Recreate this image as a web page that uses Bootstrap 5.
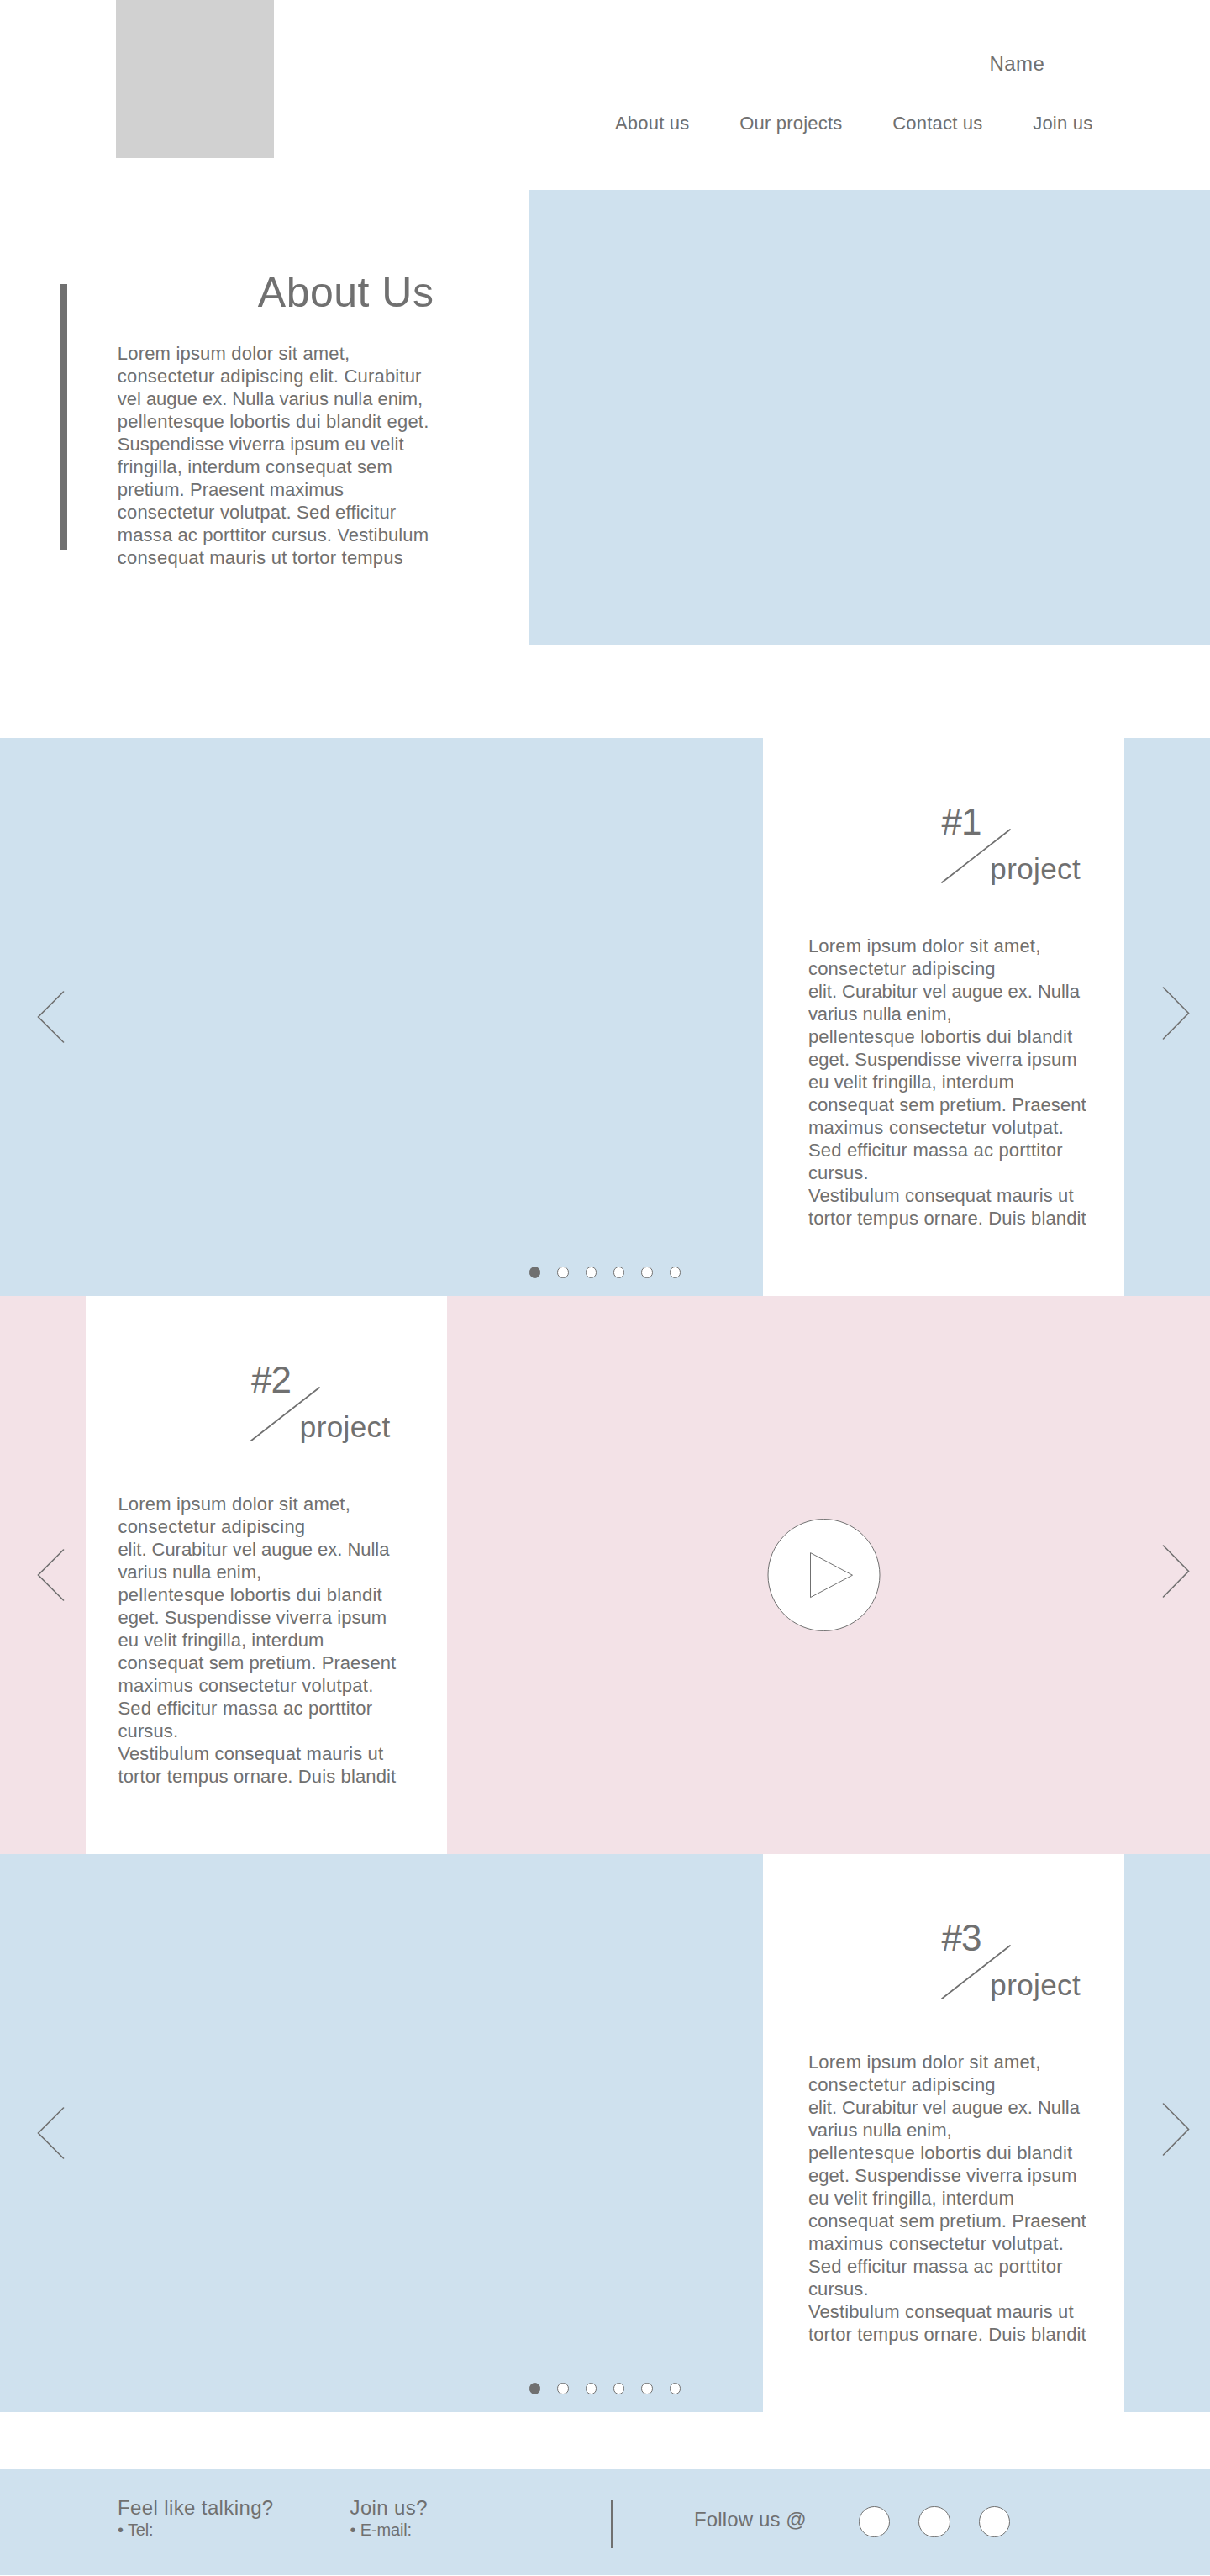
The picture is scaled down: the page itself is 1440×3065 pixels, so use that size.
<!DOCTYPE html>
<html lang="en">
<head>
<meta charset="utf-8">
<meta name="viewport" content="width=device-width, initial-scale=1">
<title>About Us</title>
<link rel="stylesheet" href="https://cdn.jsdelivr.net/npm/bootstrap@5.3.0/dist/css/bootstrap.min.css">
<style>
  :root { --ink: #707070; --sky: #cfe1ee; --rose: #f3e2e7; }
  body { font-family: "Liberation Sans", Arial, sans-serif; color: var(--ink); background: #fff; font-size: 22px; line-height: 27px; width: 1440px; }
  .bg-sky { background: var(--sky); }
  .bg-rose { background: var(--rose); }
  .bg-ink { background: var(--ink); }
  svg { display: block; fill: none; stroke: var(--ink); }

  .site-header { height: 226px; padding-left: 138px; }
  .logo-box { width: 188px; height: 188px; background: #d1d1d1; }
  .header-side { width: 708px; padding-top: 62px; }
  .site-name { font-size: 24px; line-height: 27px; letter-spacing: .45px; margin: 0 0 45px 445.5px; }
  .site-menu { gap: 59.8px; line-height: 25px; letter-spacing: .2px; }
  .site-menu .nav-link { padding: 0; color: var(--ink); }

  .hero { height: 540.5px; margin-bottom: 111.5px; }
  .hero-side { width: 630px; padding-left: 71.5px; }
  .hero-bar { width: 8px; height: 317px; margin-top: 112px; }
  .hero-text { padding: 94px 0 0 60.3px; }
  .hero-text h1 { font-size: 50px; line-height: 56px; font-weight: 400; letter-spacing: .5px; margin: 0 0 31px 167px; }

  .slide-row { height: 664px; }
  .slide-media { width: 908px; }
  .slide-edge { width: 102px; }
  .slide-panel { width: 430px; padding: 75px 0 0 53.9px; }
  .slide-panel.panel-start { padding-left: 38.4px; }
  .slide-title { width: 170px; margin: 0 0 59px 157.8px; font-weight: 400; }
  .slide-title .num { font-size: 44px; line-height: 49px; letter-spacing: -1px; padding-left: .8px; }
  .slide-title .word { font-size: 35px; line-height: 39px; letter-spacing: .4px; margin-top: 12px; padding-left: 58.6px; }
  .slide-title svg { position: absolute; left: 0; top: 32px; stroke-width: 1.7; stroke-linecap: round; }
  .chevron { background: none; border: 0; padding: 0; }
  .chevron svg { stroke-width: 1.6; stroke-linecap: round; }
  .chevron-prev { margin-left: 44px; }
  .chevron-next { margin: 0 24px 9px 0; }
  .play-btn { background: none; border: 0; padding: 0; margin-left: 381px; }
  .slide-dots { position: absolute; left: 0; right: 0; bottom: 21.3px; gap: 20px; }
  .slide-dots span { width: 13.33px; height: 13.33px; border-radius: 50%; background: #fff; border: 1px solid var(--ink); }
  .slide-dots .on { background: var(--ink); }

  .copy span { white-space: nowrap; display: block; }
  .k0 { letter-spacing: -.03px; }
  .k1 { letter-spacing: .06px; }
  .k2 { letter-spacing: .13px; }
  .k3 { letter-spacing: .19px; }
  .k4 { letter-spacing: .24px; }

  .site-footer { height: 126px; margin: 68px 0 1px; padding-left: 140px; }
  .foot-col { padding-top: 32px; width: 276.5px; }
  .foot-col.foot-join { width: 310px; }
  .foot-head { font-size: 24px; line-height: 27px; font-weight: 400; letter-spacing: .38px; margin: 0 0 2px; }
  .foot-line { font-size: 20px; line-height: 22px; letter-spacing: -.15px; margin: 0; }
  .foot-rule { width: 3.3px; height: 57px; margin-top: 37px; }
  .foot-follow { padding-top: 46px; margin-left: 96.3px; width: 195.5px; letter-spacing: .12px; }
  .foot-socials { gap: 34.5px; padding-top: 43.5px; }
  .foot-socials a { width: 37.3px; height: 37.3px; border-radius: 50%; background: #fff; border: 1px solid var(--ink); }
</style>
</head>
<body>

<header class="site-header d-flex justify-content-between">
  <div class="logo-box"></div>
  <div class="header-side">
    <p class="site-name">Name</p>
    <nav class="nav site-menu flex-nowrap">
      <a class="nav-link" href="#about">About us</a>
      <a class="nav-link" href="#projects">Our projects</a>
      <a class="nav-link" href="#contact">Contact us</a>
      <a class="nav-link" href="#contact">Join us</a>
    </nav>
  </div>
</header>

<section class="hero d-flex" id="about">
  <div class="hero-side d-flex align-items-start flex-shrink-0">
    <div class="hero-bar bg-ink flex-shrink-0"></div>
    <div class="hero-text">
      <h1>About Us</h1>
      <p class="copy mb-0">
        <span class="k3">Lorem ipsum dolor sit amet,</span>
        <span class="k3">consectetur adipiscing elit. Curabitur</span>
        <span class="k0">vel augue ex. Nulla varius nulla enim,</span>
        <span class="k3">pellentesque lobortis dui blandit eget.</span>
        <span class="k1">Suspendisse viverra ipsum eu velit</span>
        <span class="k2">fringilla, interdum consequat sem</span>
        <span class="k1">pretium. Praesent maximus</span>
        <span class="k3">consectetur volutpat. Sed efficitur</span>
        <span class="k2">massa ac porttitor cursus. Vestibulum</span>
        <span class="k3">consequat mauris ut tortor tempus</span>
      </p>
    </div>
  </div>
  <div class="bg-sky flex-grow-1"></div>
</section>

<main id="projects">
  <section class="slide-row bg-sky d-flex position-relative">
    <div class="slide-media d-flex align-items-center">
      <button class="chevron chevron-prev" aria-label="Previous"><svg width="33" height="62"><path d="M31.5 1 1.5 31l30 30"/></svg></button>
    </div>
    <article class="slide-panel bg-white">
      <h2 class="slide-title position-relative">
        <div class="num">#1</div><div class="word">project</div>
        <svg width="84" height="67"><path d="M1 65 82 2"/></svg>
      </h2>
      <p class="copy mb-0">
        <span class="k3">Lorem ipsum dolor sit amet,</span>
        <span class="k4">consectetur adipiscing</span>
        <span class="k0">elit. Curabitur vel augue ex. Nulla</span>
        <span class="k0">varius nulla enim,</span>
        <span class="k3">pellentesque lobortis dui blandit</span>
        <span class="k1">eget. Suspendisse viverra ipsum</span>
        <span class="k1">eu velit fringilla, interdum</span>
        <span class="k1">consequat sem pretium. Praesent</span>
        <span class="k4">maximus consectetur volutpat.</span>
        <span class="k3">Sed efficitur massa ac porttitor</span>
        <span class="k2">cursus.</span>
        <span class="k2">Vestibulum consequat mauris ut</span>
        <span class="k2">tortor tempus ornare. Duis blandit</span>
      </p>
    </article>
    <div class="slide-edge d-flex align-items-center justify-content-end">
      <button class="chevron chevron-next" aria-label="Next"><svg width="33" height="63"><path d="M1.5 1l30 30.5-30 30.5"/></svg></button>
    </div>
    <div class="slide-dots d-flex justify-content-center">
      <span class="on"></span><span></span><span></span><span></span><span></span><span></span>
    </div>
  </section>

  <section class="slide-row bg-rose d-flex">
    <div class="slide-edge d-flex align-items-center">
      <button class="chevron chevron-prev" aria-label="Previous"><svg width="33" height="62"><path d="M31.5 1 1.5 31l30 30"/></svg></button>
    </div>
    <article class="slide-panel panel-start bg-white">
      <h2 class="slide-title position-relative">
        <div class="num">#2</div><div class="word">project</div>
        <svg width="84" height="67"><path d="M1 65 82 2"/></svg>
      </h2>
      <p class="copy mb-0">
        <span class="k3">Lorem ipsum dolor sit amet,</span>
        <span class="k4">consectetur adipiscing</span>
        <span class="k0">elit. Curabitur vel augue ex. Nulla</span>
        <span class="k0">varius nulla enim,</span>
        <span class="k3">pellentesque lobortis dui blandit</span>
        <span class="k1">eget. Suspendisse viverra ipsum</span>
        <span class="k1">eu velit fringilla, interdum</span>
        <span class="k1">consequat sem pretium. Praesent</span>
        <span class="k4">maximus consectetur volutpat.</span>
        <span class="k3">Sed efficitur massa ac porttitor</span>
        <span class="k2">cursus.</span>
        <span class="k2">Vestibulum consequat mauris ut</span>
        <span class="k2">tortor tempus ornare. Duis blandit</span>
      </p>
    </article>
    <div class="slide-media d-flex align-items-center justify-content-between">
      <button class="play-btn" aria-label="Play"><svg width="135" height="135"><circle cx="67.5" cy="67" r="66.5" fill="#fff"/><path d="M51.5 40.6v53l50-26.4z"/></svg></button>
      <button class="chevron chevron-next" aria-label="Next"><svg width="33" height="63"><path d="M1.5 1l30 30.5-30 30.5"/></svg></button>
    </div>
  </section>

  <section class="slide-row bg-sky d-flex position-relative">
    <div class="slide-media d-flex align-items-center">
      <button class="chevron chevron-prev" aria-label="Previous"><svg width="33" height="62"><path d="M31.5 1 1.5 31l30 30"/></svg></button>
    </div>
    <article class="slide-panel bg-white">
      <h2 class="slide-title position-relative">
        <div class="num">#3</div><div class="word">project</div>
        <svg width="84" height="67"><path d="M1 65 82 2"/></svg>
      </h2>
      <p class="copy mb-0">
        <span class="k3">Lorem ipsum dolor sit amet,</span>
        <span class="k4">consectetur adipiscing</span>
        <span class="k0">elit. Curabitur vel augue ex. Nulla</span>
        <span class="k0">varius nulla enim,</span>
        <span class="k3">pellentesque lobortis dui blandit</span>
        <span class="k1">eget. Suspendisse viverra ipsum</span>
        <span class="k1">eu velit fringilla, interdum</span>
        <span class="k1">consequat sem pretium. Praesent</span>
        <span class="k4">maximus consectetur volutpat.</span>
        <span class="k3">Sed efficitur massa ac porttitor</span>
        <span class="k2">cursus.</span>
        <span class="k2">Vestibulum consequat mauris ut</span>
        <span class="k2">tortor tempus ornare. Duis blandit</span>
      </p>
    </article>
    <div class="slide-edge d-flex align-items-center justify-content-end">
      <button class="chevron chevron-next" aria-label="Next"><svg width="33" height="63"><path d="M1.5 1l30 30.5-30 30.5"/></svg></button>
    </div>
    <div class="slide-dots d-flex justify-content-center">
      <span class="on"></span><span></span><span></span><span></span><span></span><span></span>
    </div>
  </section>
</main>

<footer class="site-footer bg-sky d-flex align-items-start" id="contact">
  <div class="foot-col">
    <h3 class="foot-head">Feel like talking?</h3>
    <p class="foot-line">• Tel:</p>
  </div>
  <div class="foot-col foot-join">
    <h3 class="foot-head">Join us?</h3>
    <p class="foot-line">• E-mail:</p>
  </div>
  <div class="foot-rule bg-ink"></div>
  <h3 class="foot-head foot-follow">Follow us @</h3>
  <div class="foot-socials d-flex">
    <a href="#contact" aria-label="Social profile"></a>
    <a href="#contact" aria-label="Social profile"></a>
    <a href="#contact" aria-label="Social profile"></a>
  </div>
</footer>

<script src="https://cdn.jsdelivr.net/npm/bootstrap@5.3.0/dist/js/bootstrap.bundle.min.js"></script>
</body>
</html>
